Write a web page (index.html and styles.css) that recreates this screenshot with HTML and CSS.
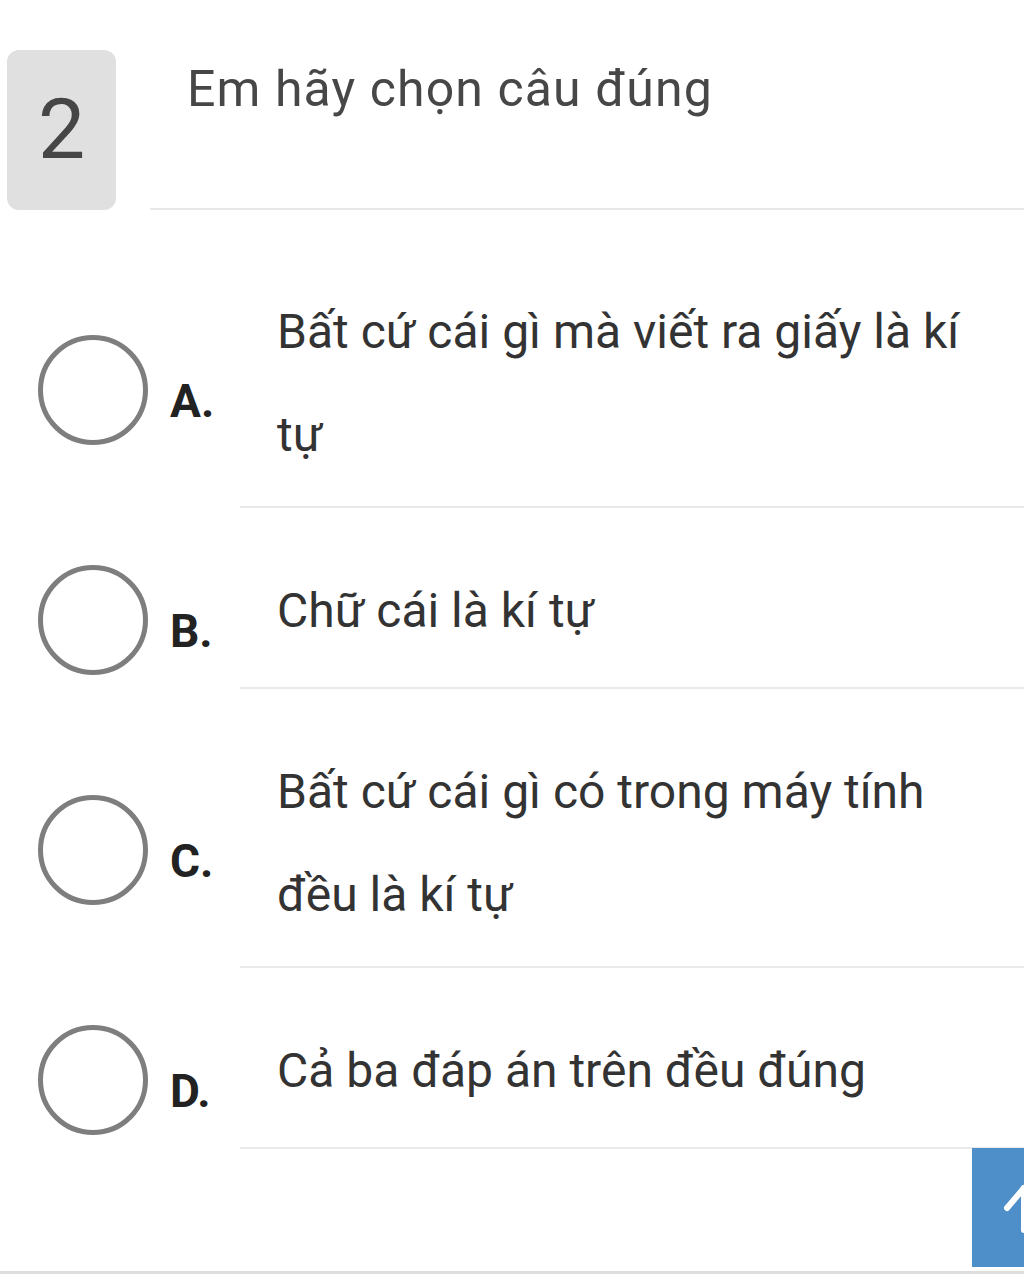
FILE: index.html
```html
<!DOCTYPE html>
<html lang="vi">
<head>
<meta charset="utf-8">
<title>Câu hỏi 2</title>
<link rel="stylesheet" href="styles.css">
</head>
<body>
<main class="quiz">
  <header class="q-head">
    <div class="q-num">2</div>
    <div class="q-title">Em hãy chọn câu đúng</div>
  </header>
  <ul class="options">
    <li class="option">
      <div class="mark"><span class="radio"></span><span class="letter">A.</span></div>
      <div class="answer">Bất cứ cái gì mà viết ra giấy là kí tự</div>
    </li>
    <li class="option">
      <div class="mark"><span class="radio"></span><span class="letter">B.</span></div>
      <div class="answer">Chữ cái là kí tự</div>
    </li>
    <li class="option">
      <div class="mark"><span class="radio"></span><span class="letter">C.</span></div>
      <div class="answer">Bất cứ cái gì có trong máy tính đều là kí tự</div>
    </li>
    <li class="option">
      <div class="mark"><span class="radio"></span><span class="letter">D.</span></div>
      <div class="answer">Cả ba đáp án trên đều đúng</div>
    </li>
  </ul>
  <footer class="page-foot"></footer>
  <button class="to-top" type="button" aria-label="Lên đầu trang">
    <svg width="104" height="119" viewBox="0 0 104 119" fill="none" stroke="#fff" stroke-width="6" stroke-linecap="round" stroke-linejoin="round">
      <path d="M52 40 V82"/>
      <path d="M35 60 L52 40 L69 60"/>
    </svg>
  </button>
</main>
</body>
</html>
```
FILE: styles.css
```css
html, body {
  margin: 0;
  padding: 0;
  background: #ffffff;
  overflow: hidden;
}

body {
  font-family: Roboto, "Noto Sans", "Liberation Sans", sans-serif;
}

.quiz {
  position: relative;
  padding-top: 50px;
  min-height: 1280px;
  box-sizing: border-box;
}

.q-head {
  display: flex;
  height: 160px;
}

.q-num {
  flex: none;
  width: 109px;
  margin-left: 7px;
  border-radius: 12px;
  background: #e0e0e0;
  color: #464646;
  font-size: 84px;
  line-height: 1;
  display: flex;
  align-items: center;
  justify-content: center;
}

.q-title {
  flex: 1;
  margin-left: 34px;
  padding: 9px 0 0 37px;
  box-sizing: border-box;
  border-bottom: 2px solid #e8e8e8;
  color: #474747;
  font-size: 50px;
  letter-spacing: 1.1px;
  line-height: 60px;
}

.options {
  list-style: none;
  margin: 0;
  padding: 0;
}

.option {
  display: flex;
}

.option:first-child {
  margin-top: 19px;
}

.mark {
  flex: none;
  width: 240px;
  box-sizing: border-box;
  padding: 57px 0 14px 38px;
  display: flex;
  align-items: center;
}

.radio {
  flex: none;
  width: 110px;
  height: 110px;
  box-sizing: border-box;
  border: 5px solid #7e7e7e;
  border-radius: 50%;
}

.letter {
  margin: 22px 0 0 22px;
  color: #222222;
  font-size: 46px;
  font-weight: 700;
  line-height: 46px;
}

.answer {
  flex: 1;
  min-width: 0;
  padding: 51px 30px 20px 37px;
  border-bottom: 2px solid #e9e9e9;
  color: #333333;
  font-size: 48px;
  line-height: 103px;
}

.page-foot {
  margin-top: 122px;
  border-top: 3px solid #dedede;
}

.to-top {
  position: absolute;
  left: 972px;
  top: 1148px;
  width: 52px;
  height: 119px;
  padding: 0;
  border: none;
  background: #4f8fc9;
  overflow: hidden;
  display: block;
}

.to-top svg {
  display: block;
}
```
